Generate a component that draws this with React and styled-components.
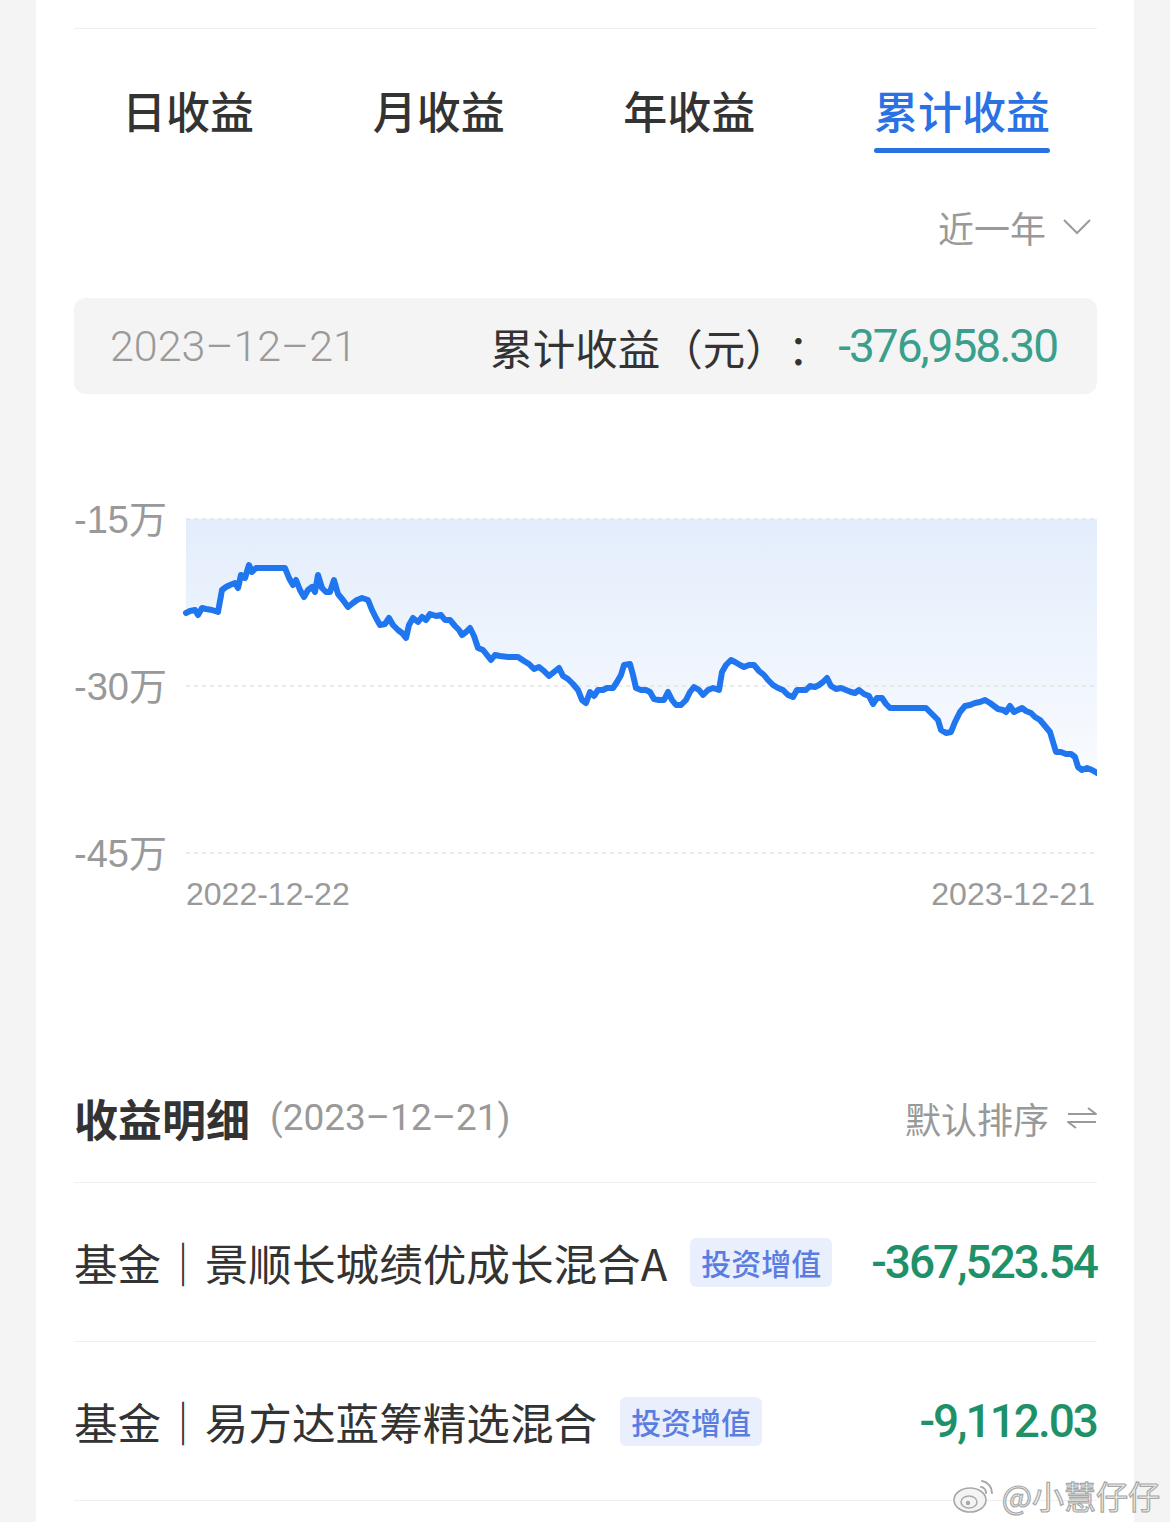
import React from "react";
import styled, { createGlobalStyle } from "styled-components";

const Global = createGlobalStyle`
  html, body { margin: 0; padding: 0; background: #f4f4f4; }
  body {
    font-family: "Noto Sans CJK SC", "Noto Sans", sans-serif;
    color: #333;
    text-spacing-trim: space-all;
  }
`;

const Page = styled.div`
  position: relative;
  min-height: 1522px;
  background: #f4f4f4;
`;

const Card = styled.div`
  margin: 0 36px;
  background: #fff;
  min-height: 1522px;
  padding: 28px 37px 0 38px;
  box-sizing: border-box;
`;

const Tabs = styled.div`
  display: flex;
  justify-content: space-between;
  padding: 0 47px 0 48px;
  border-top: 1px solid #eeeeee;
`;

const Tab = styled.div`
  display: flex;
  flex-direction: column;
  align-items: center;
  padding-top: 52px;
  font-size: 44px;
  line-height: 58px;
  font-weight: 500;
  color: ${(p) => (p.$active ? "#2a72e4" : "#333")};
  &::after {
    content: "";
    display: block;
    margin-top: 9px;
    height: 5px;
    width: 100%;
    border-radius: 3px;
    background: ${(p) => (p.$active ? "#2a72e4" : "transparent")};
  }
`;

const RangeRow = styled.div`
  display: flex;
  justify-content: flex-end;
  align-items: center;
  gap: 16px;
  margin-top: 51px;
  padding-right: 5px;
  font-size: 36px;
  line-height: 46px;
  color: #999;
`;

const Summary = styled.div`
  margin-top: 48px;
  height: 96px;
  display: flex;
  align-items: center;
  border-radius: 12px;
  background: #f4f4f4;
  padding: 0 40px 0 36px;
`;

const SumDate = styled.div`
  font-family: Roboto, sans-serif;
  font-weight: 300;
  font-size: 43px;
  color: #9a9a9a;
  flex: 1;
`;

const SumLabel = styled.div`
  font-size: 42.5px;
  color: #333;
  margin-right: 8px;
  white-space: nowrap;
`;

const SumValue = styled.div`
  font-family: Roboto, sans-serif;
  font-size: 46px;
  letter-spacing: -2px;
  color: #3a9f8c;
`;

const ChartSvg = styled.svg`
  display: block;
  margin-top: 86px;
`;

const DetailHead = styled.div`
  margin-top: 170px;
  display: flex;
  align-items: center;
  padding-bottom: 36px;
  border-bottom: 1px solid #efefef;
  line-height: 56px;
`;

const DetailTitle = styled.div`
  font-size: 44px;
  font-weight: 700;
  color: #333;
`;

const DetailDate = styled.div`
  font-family: Roboto, "Noto Sans CJK SC", sans-serif;
  font-size: 37px;
  color: #999;
  margin-left: 20px;
  flex: 1;
`;

const Sort = styled.div`
  display: flex;
  align-items: center;
  gap: 18px;
  font-size: 36px;
  color: #999;
`;

const Row = styled.div`
  height: 158px;
  display: flex;
  align-items: center;
  border-bottom: 1px solid #efefef;
`;

const Name = styled.div`
  font-size: 43.6px;
  color: #333;
  white-space: nowrap;
`;

const Badge = styled.span`
  margin-left: 23px;
  padding: 0 11px;
  height: 49px;
  line-height: 49px;
  border-radius: 6px;
  background: #e9effc;
  color: #5a7de2;
  font-size: 30px;
  font-weight: 500;
`;

const Amount = styled.div`
  margin-left: auto;
  font-family: Roboto, sans-serif;
  font-weight: 500;
  font-size: 46px;
  letter-spacing: -2px;
  color: #1f9169;
`;

const Watermark = styled.div`
  position: absolute;
  right: 10px;
  top: 1472px;
  display: flex;
  align-items: center;
  gap: 4px;
  font-size: 32px;
  color: #f4f4f4;
  -webkit-text-stroke: 1.2px #a8a8a8;
`;

const raw = [
  [186,613],[190,611],[195,610],[198,615],[202,608],[206,609],[212,610],[218,612],[222,590],[226,587],[230,585],[235,583],[238,588],[241,575],[245,578],[249,565],[252,572],[256,568],[262,568],[272,568],[285,568],[289,578],[293,585],[296,580],[300,590],[304,597],[308,590],[312,587],[315,592],[318,575],[322,588],[326,592],[330,592],[334,580],[338,594],[343,600],[348,607],[353,603],[357,600],[362,598],[368,600],[372,610],[376,618],[380,625],[385,624],[389,618],[393,625],[398,630],[402,633],[406,638],[409,625],[413,618],[418,622],[422,617],[426,620],[430,614],[436,616],[441,615],[445,620],[450,620],[455,626],[459,630],[462,635],[466,632],[470,628],[474,636],[478,648],[483,650],[487,655],[491,660],[495,655],[500,656],[508,657],[518,657],[524,661],[529,664],[534,669],[539,667],[544,671],[549,676],[554,672],[559,668],[563,676],[568,679],[573,684],[578,690],[582,700],[586,703],[590,692],[594,696],[598,690],[603,690],[607,688],[613,688],[617,682],[621,675],[624,665],[630,664],[633,675],[636,688],[641,690],[646,690],[650,692],[654,699],[659,700],[664,700],[668,692],[672,700],[676,705],[681,705],[686,700],[690,692],[694,687],[699,690],[703,695],[708,690],[713,688],[719,690],[722,672],[726,665],[731,660],[735,662],[740,665],[744,667],[749,665],[754,665],[759,671],[764,675],[768,680],[773,685],[778,688],[783,690],[788,695],[793,697],[797,690],[802,690],[806,690],[810,686],[815,687],[819,685],[823,682],[827,678],[831,686],[836,689],[841,688],[846,690],[851,692],[855,693],[859,690],[864,694],[869,696],[873,704],[877,698],[882,698],[886,704],[890,708],[897,708],[906,708],[916,708],[926,708],[930,712],[934,716],[938,720],[941,730],[946,733],[951,732],[955,722],[960,712],[965,706],[970,705],[975,703],[980,702],[985,700],[990,703],[994,706],[998,709],[1003,710],[1006,712],[1010,706],[1014,712],[1018,710],[1022,708],[1026,711],[1031,713],[1035,717],[1040,720],[1045,726],[1050,732],[1053,742],[1056,752],[1061,752],[1066,754],[1071,754],[1075,757],[1078,767],[1082,770],[1087,768],[1092,770],[1097,773]
];

const OX = 74;
const OY = 480;
const pts = raw.map(([x, y]) => [x - OX, y - OY]);
const linePath = pts.map(([x, y], i) => `${i ? "L" : "M"}${x} ${y}`).join(" ");
const areaPath = `${linePath} L${1097 - OX} ${519 - OY} L${186 - OX} ${519 - OY} Z`;

const gridYs = [519 - OY, 686 - OY, 853 - OY];
const yLabels = ["-15万", "-30万", "-45万"];

function Chart() {
  return (
    <ChartSvg width="1023" height="440" viewBox="0 0 1023 440">
      <defs>
        <linearGradient id="fillg" x1="0" y1={519 - OY} x2="0" y2={790 - OY} gradientUnits="userSpaceOnUse">
          <stop offset="0" stopColor="#e3edfb" />
          <stop offset="1" stopColor="#fafcff" />
        </linearGradient>
      </defs>
      <path d={areaPath} fill="url(#fillg)" />
      {gridYs.map((y, i) => (
        <g key={i}>
          <line x1={112} x2={1023} y1={y} y2={y} stroke="#e3e3e3" strokeWidth="1.5" strokeDasharray="4 4" />
          <text x="0" y={y + 14} fontSize="38" fill="#999" fontFamily='"Liberation Sans", "Noto Sans CJK SC", sans-serif'>
            {yLabels[i]}
          </text>
        </g>
      ))}
      <path d={linePath} fill="none" stroke="#1f76ee" strokeWidth="6" strokeLinejoin="round" strokeLinecap="round" />
      <text x="112" y="425" fontSize="32" fill="#999" fontFamily='"Liberation Sans", sans-serif'>2022-12-22</text>
      <text x="1021" y="425" fontSize="32" fill="#999" textAnchor="end" fontFamily='"Liberation Sans", sans-serif'>2023-12-21</text>
    </ChartSvg>
  );
}

function WeiboLogo() {
  return (
    <svg width="46" height="40" viewBox="0 0 46 40">
      <ellipse cx="18" cy="25" rx="16" ry="12" fill="#f4f4f4" stroke="#a8a8a8" strokeWidth="1.6" />
      <ellipse cx="17" cy="27" rx="8" ry="6" fill="none" stroke="#a8a8a8" strokeWidth="1.5" />
      <circle cx="16" cy="28" r="2.2" fill="#a8a8a8" />
      <path d="M30 6 a12 12 0 0 1 10 12" fill="none" stroke="#a8a8a8" strokeWidth="2" strokeLinecap="round" />
      <path d="M29 12 a6 6 0 0 1 5 6" fill="none" stroke="#a8a8a8" strokeWidth="2" strokeLinecap="round" />
    </svg>
  );
}

export default function App() {
  return (
    <Page>
      <Global />
      <Card>
        <Tabs>
          <Tab>日收益</Tab>
          <Tab>月收益</Tab>
          <Tab>年收益</Tab>
          <Tab $active>累计收益</Tab>
        </Tabs>
        <RangeRow>
          <span>近一年</span>
          <svg width="30" height="18" viewBox="0 0 30 18">
            <polyline points="2,2 15,15 28,2" fill="none" stroke="#9a9a9a" strokeWidth="2" />
          </svg>
        </RangeRow>
        <Summary>
          <SumDate>2023–12–21</SumDate>
          <SumLabel>累计收益（元）：</SumLabel>
          <SumValue>-376,958.30</SumValue>
        </Summary>
        <Chart />
        <DetailHead>
          <DetailTitle>收益明细</DetailTitle>
          <DetailDate>(2023–12–21)</DetailDate>
          <Sort>
            <span>默认排序</span>
            <svg width="30" height="22" viewBox="0 0 30 22">
              <path d="M1 7 H29 L21 1" fill="none" stroke="#999" strokeWidth="2" strokeLinejoin="round" />
              <path d="M29 15 H1 L9 21" fill="none" stroke="#999" strokeWidth="2" strokeLinejoin="round" />
            </svg>
          </Sort>
        </DetailHead>
        <Row>
          <Name>基金｜景顺长城绩优成长混合A</Name>
          <Badge>投资增值</Badge>
          <Amount>-367,523.54</Amount>
        </Row>
        <Row>
          <Name>基金｜易方达蓝筹精选混合</Name>
          <Badge>投资增值</Badge>
          <Amount>-9,112.03</Amount>
        </Row>
      </Card>
      <Watermark>
        <WeiboLogo />
        <span>@小慧仔仔</span>
      </Watermark>
    </Page>
  );
}
